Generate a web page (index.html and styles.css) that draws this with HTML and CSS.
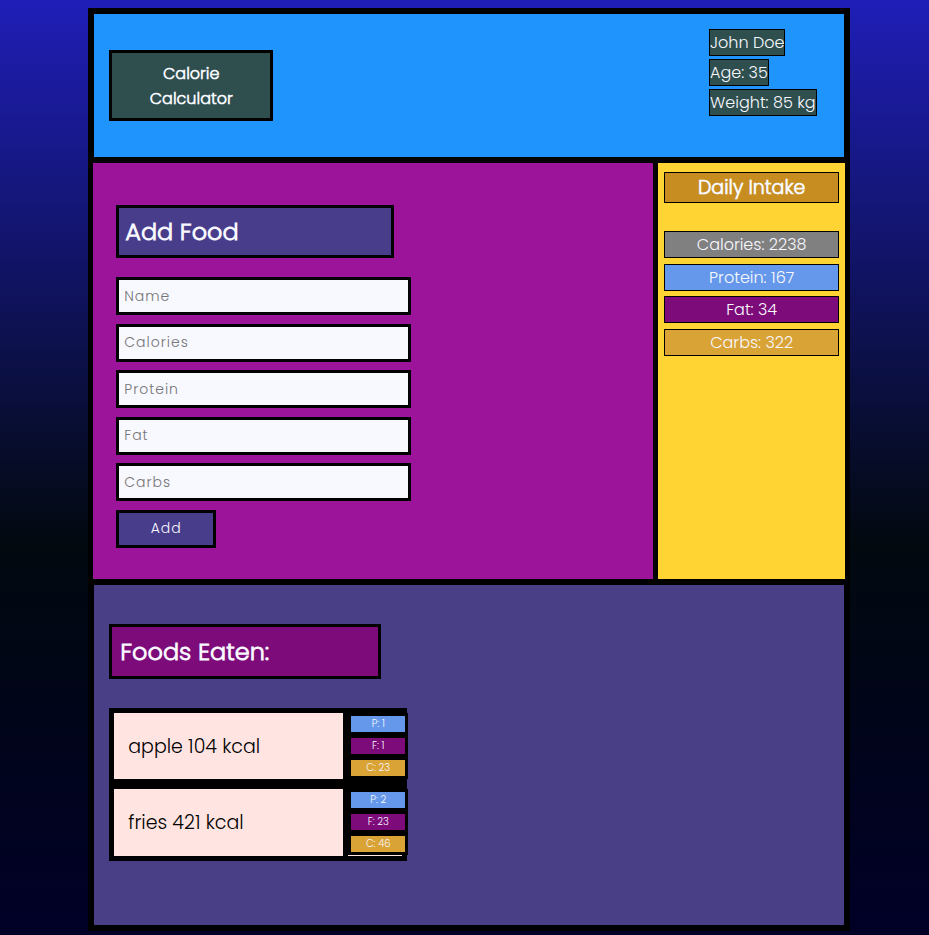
FILE: index.html
```html
<!DOCTYPE html>
<html lang="en">
<head>
<meta charset="utf-8">
<meta name="viewport" content="width=device-width, initial-scale=1">
<title>Calorie Calculator</title>
<link rel="stylesheet" href="styles.css">
</head>
<body>
<div class="app">
  <header class="header">
    <h1 class="brand">Calorie Calculator</h1>
    <ul class="user">
      <li>John Doe</li>
      <li>Age: 35</li>
      <li>Weight: 85 kg</li>
    </ul>
  </header>
  <main class="main">
    <section class="add-food">
      <h2 class="heading heading-add">Add Food</h2>
      <form class="form">
        <input class="field" type="text" placeholder="Name" aria-label="Name">
        <input class="field" type="text" placeholder="Calories" aria-label="Calories">
        <input class="field" type="text" placeholder="Protein" aria-label="Protein">
        <input class="field" type="text" placeholder="Fat" aria-label="Fat">
        <input class="field" type="text" placeholder="Carbs" aria-label="Carbs">
        <button class="submit" type="button">Add</button>
      </form>
    </section>
    <aside class="intake">
      <h2 class="intake-title">Daily Intake</h2>
      <ul class="intake-list">
        <li class="calories">Calories: 2238</li>
        <li class="protein">Protein: 167</li>
        <li class="fat">Fat: 34</li>
        <li class="carbs">Carbs: 322</li>
      </ul>
    </aside>
  </main>
  <section class="eaten">
    <h2 class="heading heading-eaten">Foods Eaten:</h2>
    <ul class="foods">
      <li class="food">
        <p class="food-name">apple 104 kcal</p>
        <ul class="macros">
          <li class="protein">P: 1</li>
          <li class="fat">F: 1</li>
          <li class="carbs">C: 23</li>
        </ul>
      </li>
      <li class="food">
        <p class="food-name">fries 421 kcal</p>
        <ul class="macros">
          <li class="protein">P: 2</li>
          <li class="fat">F: 23</li>
          <li class="carbs">C: 46</li>
        </ul>
      </li>
    </ul>
  </section>
</div>
</body>
</html>
```
FILE: styles.css
```css
@font-face {
  font-family: "Poppins Heading";
  src: local("Poppins Light"), local("Poppins-Light");
  font-weight: 300;
}

* {
  box-sizing: border-box;
  margin: 0;
  padding: 0;
}

html {
  min-height: 100%;
  background: linear-gradient(180deg, #1f1eb7 0%, #02090f 58%, #000027 100%);
}

body {
  font-family: Poppins, Inter, "Open Sans", sans-serif;
  font-size: 16px;
  font-weight: 300;
  line-height: 25px;
  color: ghostwhite;
}

ul {
  list-style: none;
}

.app {
  width: 82%;
  margin: 8px 0 4px 9.5%;
  background: #000;
}

.header {
  display: grid;
  grid-template-columns: 1fr 18%;
  align-items: center;
  min-height: 155px;
  border: 6px solid #000;
  background: #2094fd;
}

.brand,
.heading,
.intake-title {
  font-family: "Poppins Light", Poppins, Inter, sans-serif;
  font-weight: 700;
}

.brand {
  width: 164px;
  margin-left: 15px;
  padding: 8px 30px 7px;
  border: 3px solid #000;
  background: #2f4f4f;
  font-size: 16px;
  text-align: center;
}

.user {
  display: flex;
  flex-direction: column;
  align-items: flex-start;
  align-self: start;
  gap: 3px;
  padding-top: 15px;
}

.user li {
  border: 1px solid #000;
  background: #2f4f4f;
  white-space: nowrap;
}

.main {
  display: grid;
  grid-template-columns: 3fr 1fr;
  gap: 5px;
  padding: 0 5px;
}

.add-food {
  padding: 42px 23px 31px;
  background: #9b1499;
}

.heading {
  border: 3px solid #000;
  font-size: 24px;
}

.heading-add {
  max-width: 278px;
  margin-bottom: 19px;
  padding: 0 6px;
  background: #483d8b;
  line-height: 47px;
}

.heading-eaten {
  max-width: 272px;
  margin-bottom: 29px;
  padding: 0 8px;
  background: #7d0b7a;
  line-height: 49px;
}

.form {
  display: flex;
  flex-direction: column;
  justify-content: space-between;
  min-height: 271px;
  max-width: 295px;
}

.field,
.submit {
  height: 38px;
  border: 3px solid #000;
  border-radius: 0;
  font: inherit;
  font-size: 14px;
  letter-spacing: 1px;
}

.field {
  width: 100%;
  padding: 0 5px;
  background: ghostwhite;
  color: #222;
}

.field::placeholder {
  color: #757575;
  opacity: 1;
}

.submit {
  width: 100px;
  background: #483d8b;
  color: ghostwhite;
}

.intake {
  padding: 9px 6px;
  background: #ffd433;
  text-align: center;
}

.intake-title {
  margin-bottom: 28px;
  border: 1px solid #000;
  background: #c78d20;
  font-size: 19px;
  line-height: 29px;
}

.intake-list {
  display: flex;
  flex-direction: column;
  justify-content: space-between;
  min-height: 125px;
}

.intake-list li {
  border: 1px solid #000;
}

.calories {
  background: #808080;
}

.protein {
  background: #6598ea;
}

.fat {
  background: #7d0b7a;
}

.carbs {
  background: #d9a336;
}

.eaten {
  padding: 39px 15px 64px;
  border: 6px solid #000;
  background: #483f87;
}

.foods {
  max-width: 298px;
}

.food {
  display: grid;
  grid-template-columns: 1fr 54px;
  border: 5px solid #000;
  background: mistyrose;
}

.food:last-child {
  padding-bottom: 1px;
}

.food-name {
  display: flex;
  align-items: center;
  padding-left: 14px;
  border-right: 5px solid #000;
  color: #000;
  font-size: 19px;
}

.food:last-child .food-name {
  margin-bottom: -1px;
}

.macros {
  margin-right: -6px;
  font-size: 10px;
  line-height: 16px;
  text-align: center;
}

.macros li {
  border: 3px solid #000;
}
```
